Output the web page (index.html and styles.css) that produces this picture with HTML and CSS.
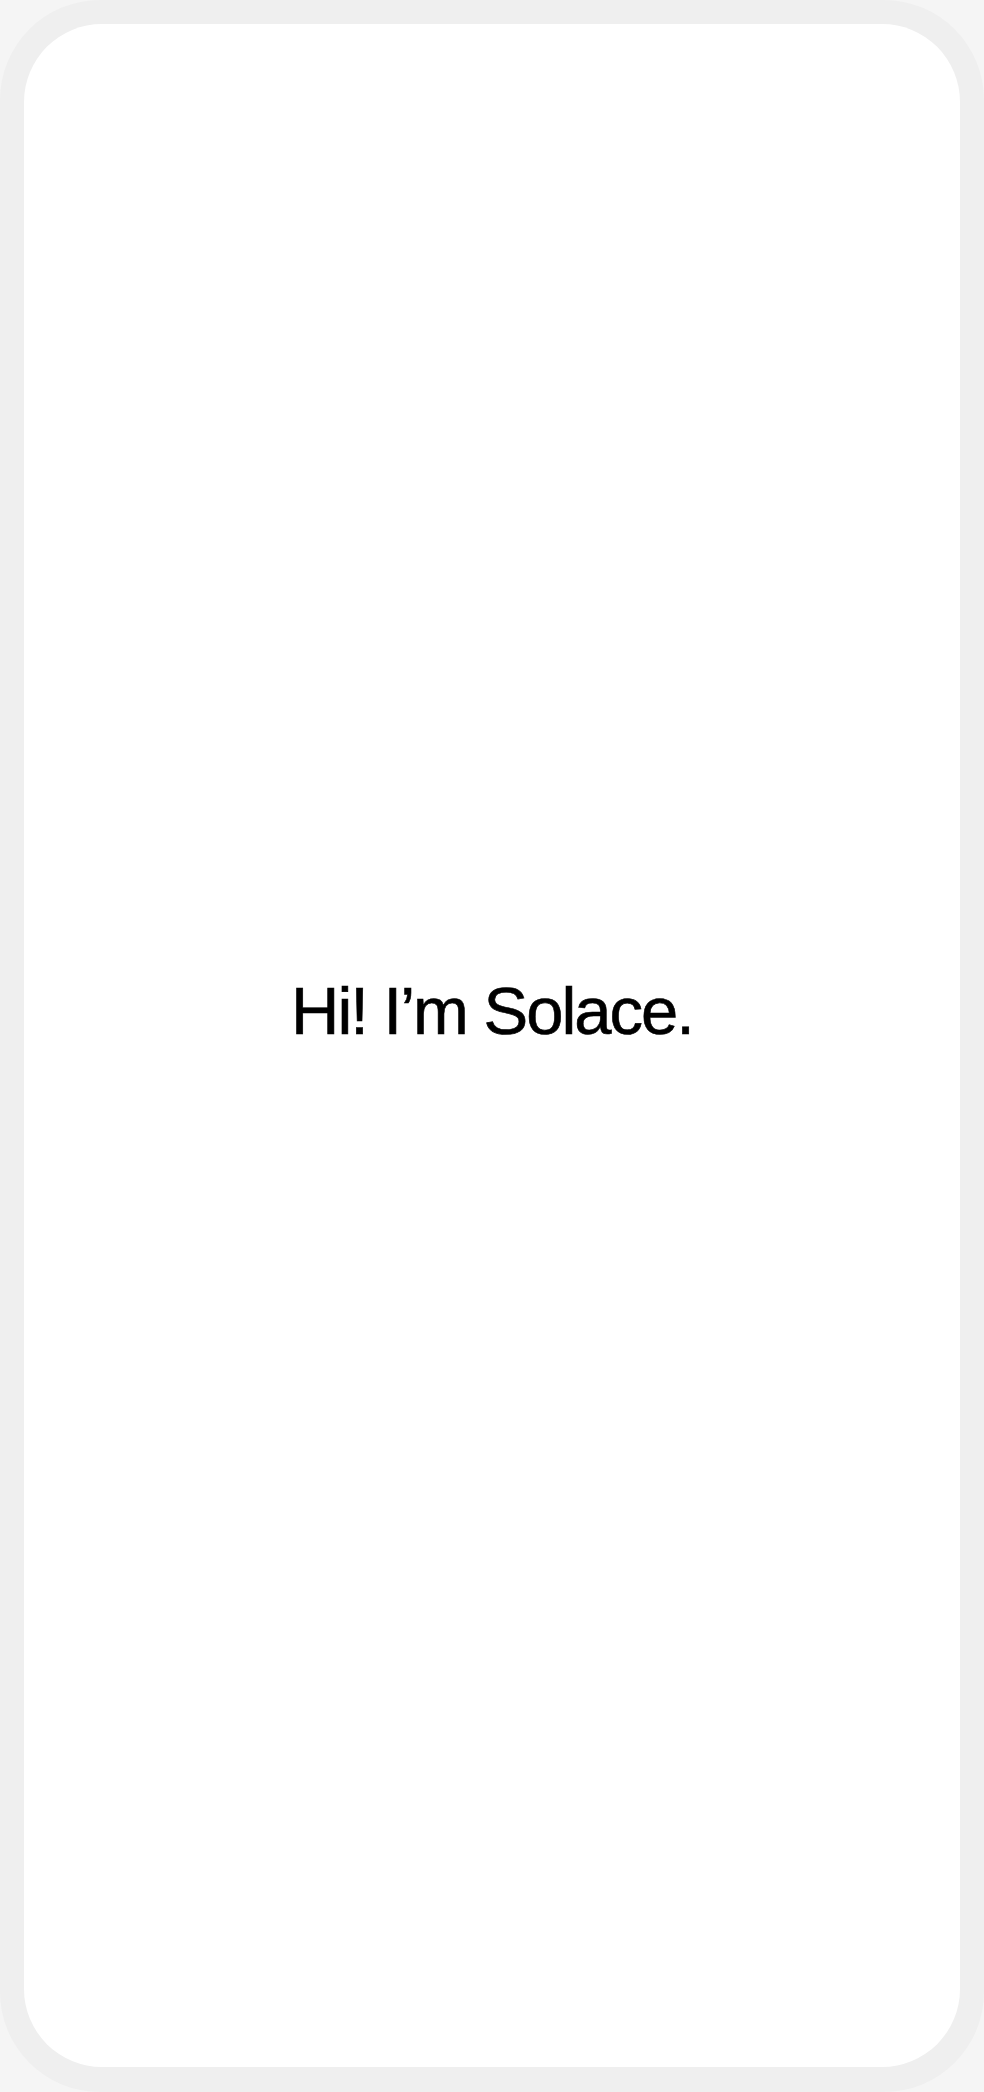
FILE: index.html
```html
<!DOCTYPE html>
<html lang="en">
<head>
    <meta charset="UTF-8">
    <meta name="viewport" content="width=device-width, initial-scale=1.0">
    <title>Solace</title>
    <link rel="stylesheet" href="styles.css">
</head>
<body>
    <div class="device">
        <div class="screen">
            <h1 class="greeting">Hi! I’m Solace.</h1>
        </div>
    </div>
</body>
</html>
```

FILE: styles.css
```css
:root {
    --frame: #efefef;
    --outside: #f5f5f5;
    --ink: #000000;
}

* {
    box-sizing: border-box;
    margin: 0;
    padding: 0;
}

html, body {
    height: 100%;
}

body {
    background: var(--outside);
    font-family: 'Liberation Sans', Arial, sans-serif;
    color: var(--ink);
}

.device {
    height: 100%;
    background: var(--frame);
    border-radius: 100px;
    padding: 24px 24px 25px;
    display: flex;
}

.screen {
    flex: 1;
    background: #ffffff;
    border-radius: 78px;
    display: flex;
    align-items: center;
    justify-content: center;
    padding-bottom: 70px;
}

.greeting {
    font-size: 67px;
    font-weight: 400;
    line-height: 1;
    letter-spacing: -2px;
    -webkit-text-stroke: 0.6px var(--ink);
}
```
